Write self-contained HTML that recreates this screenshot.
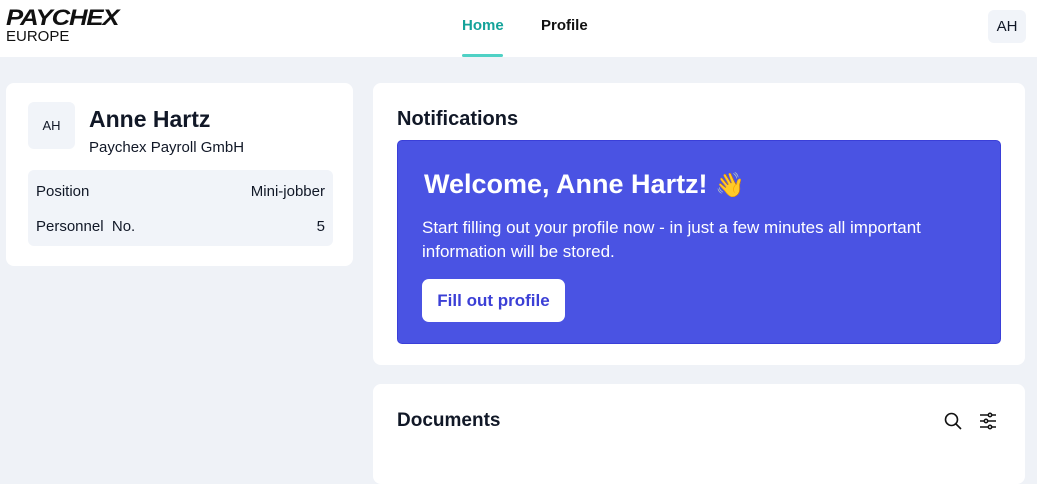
<!DOCTYPE html>
<html><head><meta charset="utf-8"><style>
*{margin:0;padding:0;box-sizing:border-box}
body{width:1037px;height:456px;overflow:hidden;background:#eff2f7;font-family:"Liberation Sans",sans-serif;color:#111827;position:relative}
.abs{position:absolute}
.hdr{left:0;top:0;width:1037px;height:57px;background:#fff}
.card{background:#fff;border-radius:8px}
</style></head><body>
<div class="abs hdr">
 <div class="abs" style="left:6px;top:7px;font-weight:bold;font-style:italic;font-size:22px;letter-spacing:-1px;line-height:22px;color:#111;transform:scaleX(1.17);transform-origin:left">PAYCHEX</div>
 <div class="abs" style="left:6px;top:29px;font-size:15px;line-height:16px;color:#111">EUROPE</div>
 <div class="abs" style="left:462px;top:17px;font-size:15px;font-weight:bold;color:#14a39a">Home</div>
 <div class="abs" style="left:462px;top:54px;width:41px;height:3px;background:#4fd1c5;border-radius:2px"></div>
 <div class="abs" style="left:541px;top:17px;font-size:15px;font-weight:bold;color:#111">Profile</div>
 <div class="abs" style="left:988px;top:10px;width:38px;height:33px;background:#f1f4f9;border-radius:6px;font-size:15px;text-align:center;line-height:33px">AH</div>
</div>
<div class="abs card" style="left:6px;top:83px;width:347px;height:183px">
 <div class="abs" style="left:22px;top:19px;width:47px;height:47px;background:#f1f4f9;border-radius:6px;font-size:13px;text-align:center;line-height:47px">AH</div>
 <div class="abs" style="left:83px;top:23px;font-size:23px;font-weight:bold">Anne Hartz</div>
 <div class="abs" style="left:83px;top:56px;font-size:15px">Paychex Payroll GmbH</div>
 <div class="abs" style="left:22px;top:87px;width:305px;height:76px;background:#f1f4f9;border-radius:6px;font-size:15px">
  <div class="abs" style="left:8px;top:13px">Position</div>
  <div class="abs" style="right:8px;top:13px">Mini-jobber</div>
  <div class="abs" style="left:8px;top:48px">Personnel&nbsp; No.</div>
  <div class="abs" style="right:8px;top:48px">5</div>
 </div>
</div>
<div class="abs card" style="left:373px;top:83px;width:652px;height:282px">
 <div class="abs" style="left:24px;top:25px;font-size:20px;font-weight:bold">Notifications</div>
 <div class="abs" style="left:24px;top:57px;width:604px;height:204px;background:#4a53e3;border:1px solid #3a3fd8;border-radius:5px;color:#fff">
  <div class="abs" style="left:26px;top:28px;font-size:27px;font-weight:bold">Welcome, Anne Hartz! <span style="font-size:24px">👋</span></div>
  <div class="abs" style="left:24px;top:75px;width:560px;font-size:17px;line-height:24px">Start filling out your profile now - in just a few minutes all important information will be stored.</div>
  <div class="abs" style="left:24px;top:138px;width:143px;height:43px;background:#fff;border-radius:7px;color:#3b3fd6;font-size:17px;font-weight:bold;text-align:center;line-height:43px">Fill out profile</div>
 </div>
</div>
<div class="abs card" style="left:373px;top:384px;width:652px;height:100px">
 <div class="abs" style="left:24px;top:26px;font-size:19px;font-weight:bold">Documents</div>
 <svg class="abs" style="left:570px;top:27px" width="20" height="20" viewBox="0 0 20 20" fill="none" stroke="#111" stroke-width="1.6"><circle cx="8.5" cy="8.5" r="6"/><path d="M13 13l5 5"/></svg>
 <svg class="abs" style="left:605px;top:27px" width="20" height="20" viewBox="0 0 20 20" fill="none" stroke="#111" stroke-width="1.5"><path d="M2 4h16M2 10h16M2 16h16"/><circle cx="12" cy="4" r="1.7" fill="#fff"/><circle cx="8" cy="10" r="1.7" fill="#fff"/><circle cx="12" cy="16" r="1.7" fill="#fff"/></svg>
</div>
</body></html>
